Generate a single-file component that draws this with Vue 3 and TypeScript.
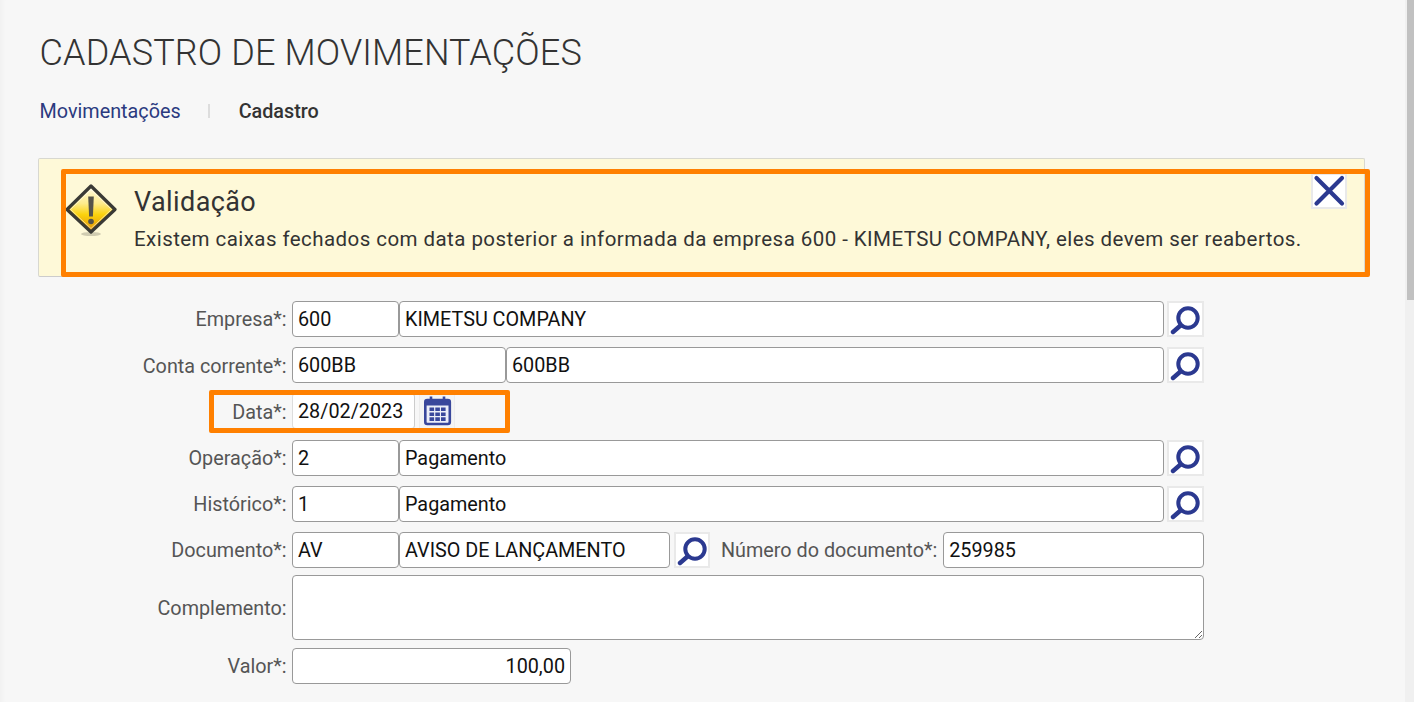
<script setup lang="ts">
interface Row {
  label: string
  code: string
  codeWidth: number
  name: string
  low?: boolean
}
const topRows: Row[] = [
  { label: 'Empresa*:', code: '600', codeWidth: 107, name: 'KIMETSU COMPANY' },
  { label: 'Conta corrente*:', code: '600BB', codeWidth: 214, name: '600BB', low: true },
]
const midRows: Row[] = [
  { label: 'Operação*:', code: '2', codeWidth: 107, name: 'Pagamento' },
  { label: 'Histórico*:', code: '1', codeWidth: 107, name: 'Pagamento' },
]
</script>

<template>
  <div class="page">
    <div class="scrollbar"><div class="thumb"></div></div>
    <h1 class="title">CADASTRO DE MOVIMENTAÇÕES</h1>
    <nav class="crumbs">
      <span class="crumb-link">Movimentações</span>
      <span class="crumb-sep"></span>
      <span class="crumb-current">Cadastro</span>
    </nav>

    <section class="alert">
      <svg class="warn" viewBox="0 0 54 54" width="54" height="54">
        <defs>
          <linearGradient id="warnFill" x1="0" y1="0" x2="0" y2="1">
            <stop offset="0" stop-color="#fffbe6" />
            <stop offset="0.38" stop-color="#fdeb8c" />
            <stop offset="0.62" stop-color="#fbd20e" />
            <stop offset="1" stop-color="#e08f06" />
          </linearGradient>
        </defs>
        <ellipse cx="27" cy="51" rx="10" ry="2" fill="#000" opacity="0.18" />
        <path d="M27 3 L51 26.5 L27 49 L3 26.5 Z" fill="url(#warnFill)" stroke="#3a3a36" stroke-width="3.2" stroke-linejoin="round" />
        <path d="M27 6.5 L47.5 26.5 L27 45.5 L6.5 26.5 Z" fill="none" stroke="#fff" stroke-opacity="0.55" stroke-width="1" stroke-linejoin="round" />
        <path d="M24.2 13.5 h5.6 l-0.9 20 h-3.8 Z" fill="#55534a" />
        <circle cx="27" cy="38.5" r="2.8" fill="#55534a" />
      </svg>
      <div class="alert-text">
        <h2>Validação</h2>
        <p>Existem caixas fechados com data posterior a informada da empresa 600 - KIMETSU COMPANY, eles devem ser reabertos.</p>
      </div>
      <button class="icon-btn close">
        <svg viewBox="0 0 36 36" width="36" height="36">
          <path d="M5.5 5 L31 30.5 M31 5 L5.5 30.5" stroke="#2b3990" stroke-width="4.2" stroke-linecap="round" fill="none" />
        </svg>
      </button>
      <div class="mark mark-alert"></div>
    </section>

    <form class="form">
      <div v-for="r in topRows" :key="r.label" class="row">
        <label class="lbl" :class="{ low: r.low }">{{ r.label }}</label>
        <input class="inp" :value="r.code" :style="{ width: r.codeWidth + 'px' }" />
        <input class="inp grow" :value="r.name" />
        <button type="button" class="icon-btn search">
          <svg viewBox="0 0 36 36" width="36" height="36">
            <circle cx="21" cy="17" r="9.7" fill="#fff" stroke="#2b3990" stroke-width="4" />
            <path d="M13.5 24.5 L6 31" stroke="#2b3990" stroke-width="4.4" stroke-linecap="round" />
          </svg>
        </button>
      </div>

      <div class="row row-date">
        <label class="lbl low">Data*:</label>
        <input class="inp date" value="28/02/2023" />
        <button type="button" class="icon-btn cal">
          <svg viewBox="0 0 36 36" width="36" height="36">
            <rect x="6.3" y="7" width="24.5" height="24" rx="2" fill="#eceef8" stroke="#39479c" stroke-width="2.6" />
            <rect x="6.3" y="7" width="24.5" height="5.5" fill="#39479c" />
            <path d="M12 3.5 v5.5 M25 3.5 v5.5" stroke="#39479c" stroke-width="2.6" />
            <path d="M10.5 14.5h4.6v3.6h-4.6zM16.3 14.5h4.6v3.6h-4.6zM22 14.5h4.6v3.6h-4.6zM10.5 19.4h4.6v3.6h-4.6zM16.3 19.4h4.6v3.6h-4.6zM22 19.4h4.6v3.6h-4.6zM10.5 24.3h4.6v3.6h-4.6zM16.3 24.3h4.6v3.6h-4.6zM22 24.3h4.6v3.6h-4.6z" fill="#39479c" />
          </svg>
        </button>
        <div class="mark mark-date"></div>
      </div>

      <div v-for="r in midRows" :key="r.label" class="row">
        <label class="lbl">{{ r.label }}</label>
        <input class="inp" :value="r.code" :style="{ width: r.codeWidth + 'px' }" />
        <input class="inp grow" :value="r.name" />
        <button type="button" class="icon-btn search">
          <svg viewBox="0 0 36 36" width="36" height="36">
            <circle cx="21" cy="17" r="9.7" fill="#fff" stroke="#2b3990" stroke-width="4" />
            <path d="M13.5 24.5 L6 31" stroke="#2b3990" stroke-width="4.4" stroke-linecap="round" />
          </svg>
        </button>
      </div>

      <div class="row">
        <label class="lbl">Documento*:</label>
        <input class="inp" value="AV" style="width: 107px" />
        <input class="inp doc-name" value="AVISO DE LANÇAMENTO" />
        <button type="button" class="icon-btn search doc-btn">
          <svg viewBox="0 0 36 36" width="36" height="36">
            <circle cx="21" cy="17" r="9.7" fill="#fff" stroke="#2b3990" stroke-width="4" />
            <path d="M13.5 24.5 L6 31" stroke="#2b3990" stroke-width="4.4" stroke-linecap="round" />
          </svg>
        </button>
        <label class="lbl-inline">Número do documento*:</label>
        <input class="inp grow" value="259985" />
      </div>

      <div class="row row-area">
        <label class="lbl low">Complemento:</label>
        <textarea class="inp area"></textarea>
      </div>

      <div class="row row-valor">
        <label class="lbl">Valor*:</label>
        <input class="inp valor" value="100,00" />
      </div>
    </form>
  </div>
</template>

<style>
html, body { margin: 0; background: #f7f7f7; overflow: hidden; }
</style>

<style scoped>
.page {
  position: relative;
  width: 1414px;
  height: 702px;
  overflow: hidden;
  box-sizing: border-box;
  background: #f7f7f7;
  padding: 31px 0 0 38px;
  font-family: Roboto, "Liberation Sans", sans-serif;
  color: #333;
  box-shadow: inset 5px 0 5px -3px rgba(0, 0, 0, 0.03);
}
.scrollbar {
  position: absolute;
  top: 0;
  right: 0;
  width: 9px;
  height: 702px;
  background: #f0f0f0;
}
.thumb {
  position: absolute;
  top: 0;
  right: 0;
  width: 7px;
  height: 300px;
  background: #c1c1c1;
}
.title {
  margin: 0 0 0 1.5px;
  font-size: 36px;
  line-height: 44px;
  font-weight: 300;
  letter-spacing: 0.14px;
  color: #333;
}
.crumbs {
  display: flex;
  align-items: center;
  margin: 24px 0 0 1.5px;
  height: 24px;
  font-size: 19.8px;
}
.crumb-link { color: #2b3a7f; }
.crumb-sep {
  width: 2px;
  height: 14px;
  background: #ddd;
  margin: 0 29px 0 27px;
}
.crumb-current { font-weight: 500; color: #333; }
.alert {
  position: relative;
  box-sizing: border-box;
  display: flex;
  margin-top: 35px;
  width: 1327px;
  height: 119px;
  background: #fef9d8;
  border: 1px solid #d8d8d0;
  border-bottom-color: #ccc;
  border-radius: 2px;
}
.warn { margin: 24px 0 0 25px; flex: none; filter: blur(0.3px); }
.alert-text { margin: 27px 0 0 16px; }
.alert-text h2 {
  margin: 0;
  font-size: 27px;
  line-height: 32px;
  font-weight: 400;
  letter-spacing: 0.4px;
  color: #333;
}
.alert-text p {
  margin: 9px 0 0;
  font-size: 20.5px;
  line-height: 24px;
  letter-spacing: 0.44px;
  white-space: nowrap;
  color: #333;
}
.icon-btn {
  box-sizing: border-box;
  flex: none;
  display: block;
  width: 36px;
  height: 36px;
  padding: 0;
  background: #fff;
  border: 0;
  box-shadow: inset 0 0 0 2px #e9e9e9;
}
.icon-btn svg { display: block; filter: blur(0.3px); }
.close { position: absolute; top: 14px; right: 17px; }
.mark {
  position: absolute;
  box-sizing: border-box;
  border: 5px solid #ff8000;
  border-radius: 2px;
  pointer-events: none;
}
.mark-alert { left: 22px; top: 10px; width: 1309px; height: 108px; }
.mark-date { left: 171px; top: -3px; width: 301px; height: 43px; }
.form { margin-top: 24px; }
.row {
  position: relative;
  display: flex;
  align-items: center;
  width: 1166px;
  height: 36px;
  margin-bottom: 10px;
}
.row-date { margin-bottom: 11px; }
.row-area { height: 65px; margin-top: -3px; margin-bottom: 8px; }
.row-valor { margin-bottom: 0; }
.lbl {
  flex: none;
  box-sizing: border-box;
  width: 254px;
  padding-right: 5.5px;
  text-align: right;
  font-size: 19.8px;
  color: #555;
}
.lbl.low { padding-top: 2px; }
.inp {
  box-sizing: border-box;
  height: 36px;
  padding: 0 5px;
  background: #fff;
  border: 1px solid #999;
  border-radius: 4px;
  font: 19.8px Roboto, "Liberation Sans", sans-serif;
  color: #111;
  outline: none;
  flex: none;
}
.grow { flex: 1; min-width: 0; }
.row > .inp.grow + .search { margin-left: 3px; width: 37px; }
.date { width: 123px; border-color: #ddd; border-right-color: #ccc; }
.cal { margin-left: 4px; background: #f4f4f4; box-shadow: inset 0 0 0 1px #ececec; }
.doc-name { width: 271px; }
.doc-btn { margin-left: 4px; }
.lbl-inline {
  flex: none;
  margin-left: 11px;
  margin-right: 6px;
  font-size: 19.8px;
  color: #555;
}
.area { flex: 1; height: 65px; padding: 4px 5px; }
.valor { width: 279px; text-align: right; }
</style>
